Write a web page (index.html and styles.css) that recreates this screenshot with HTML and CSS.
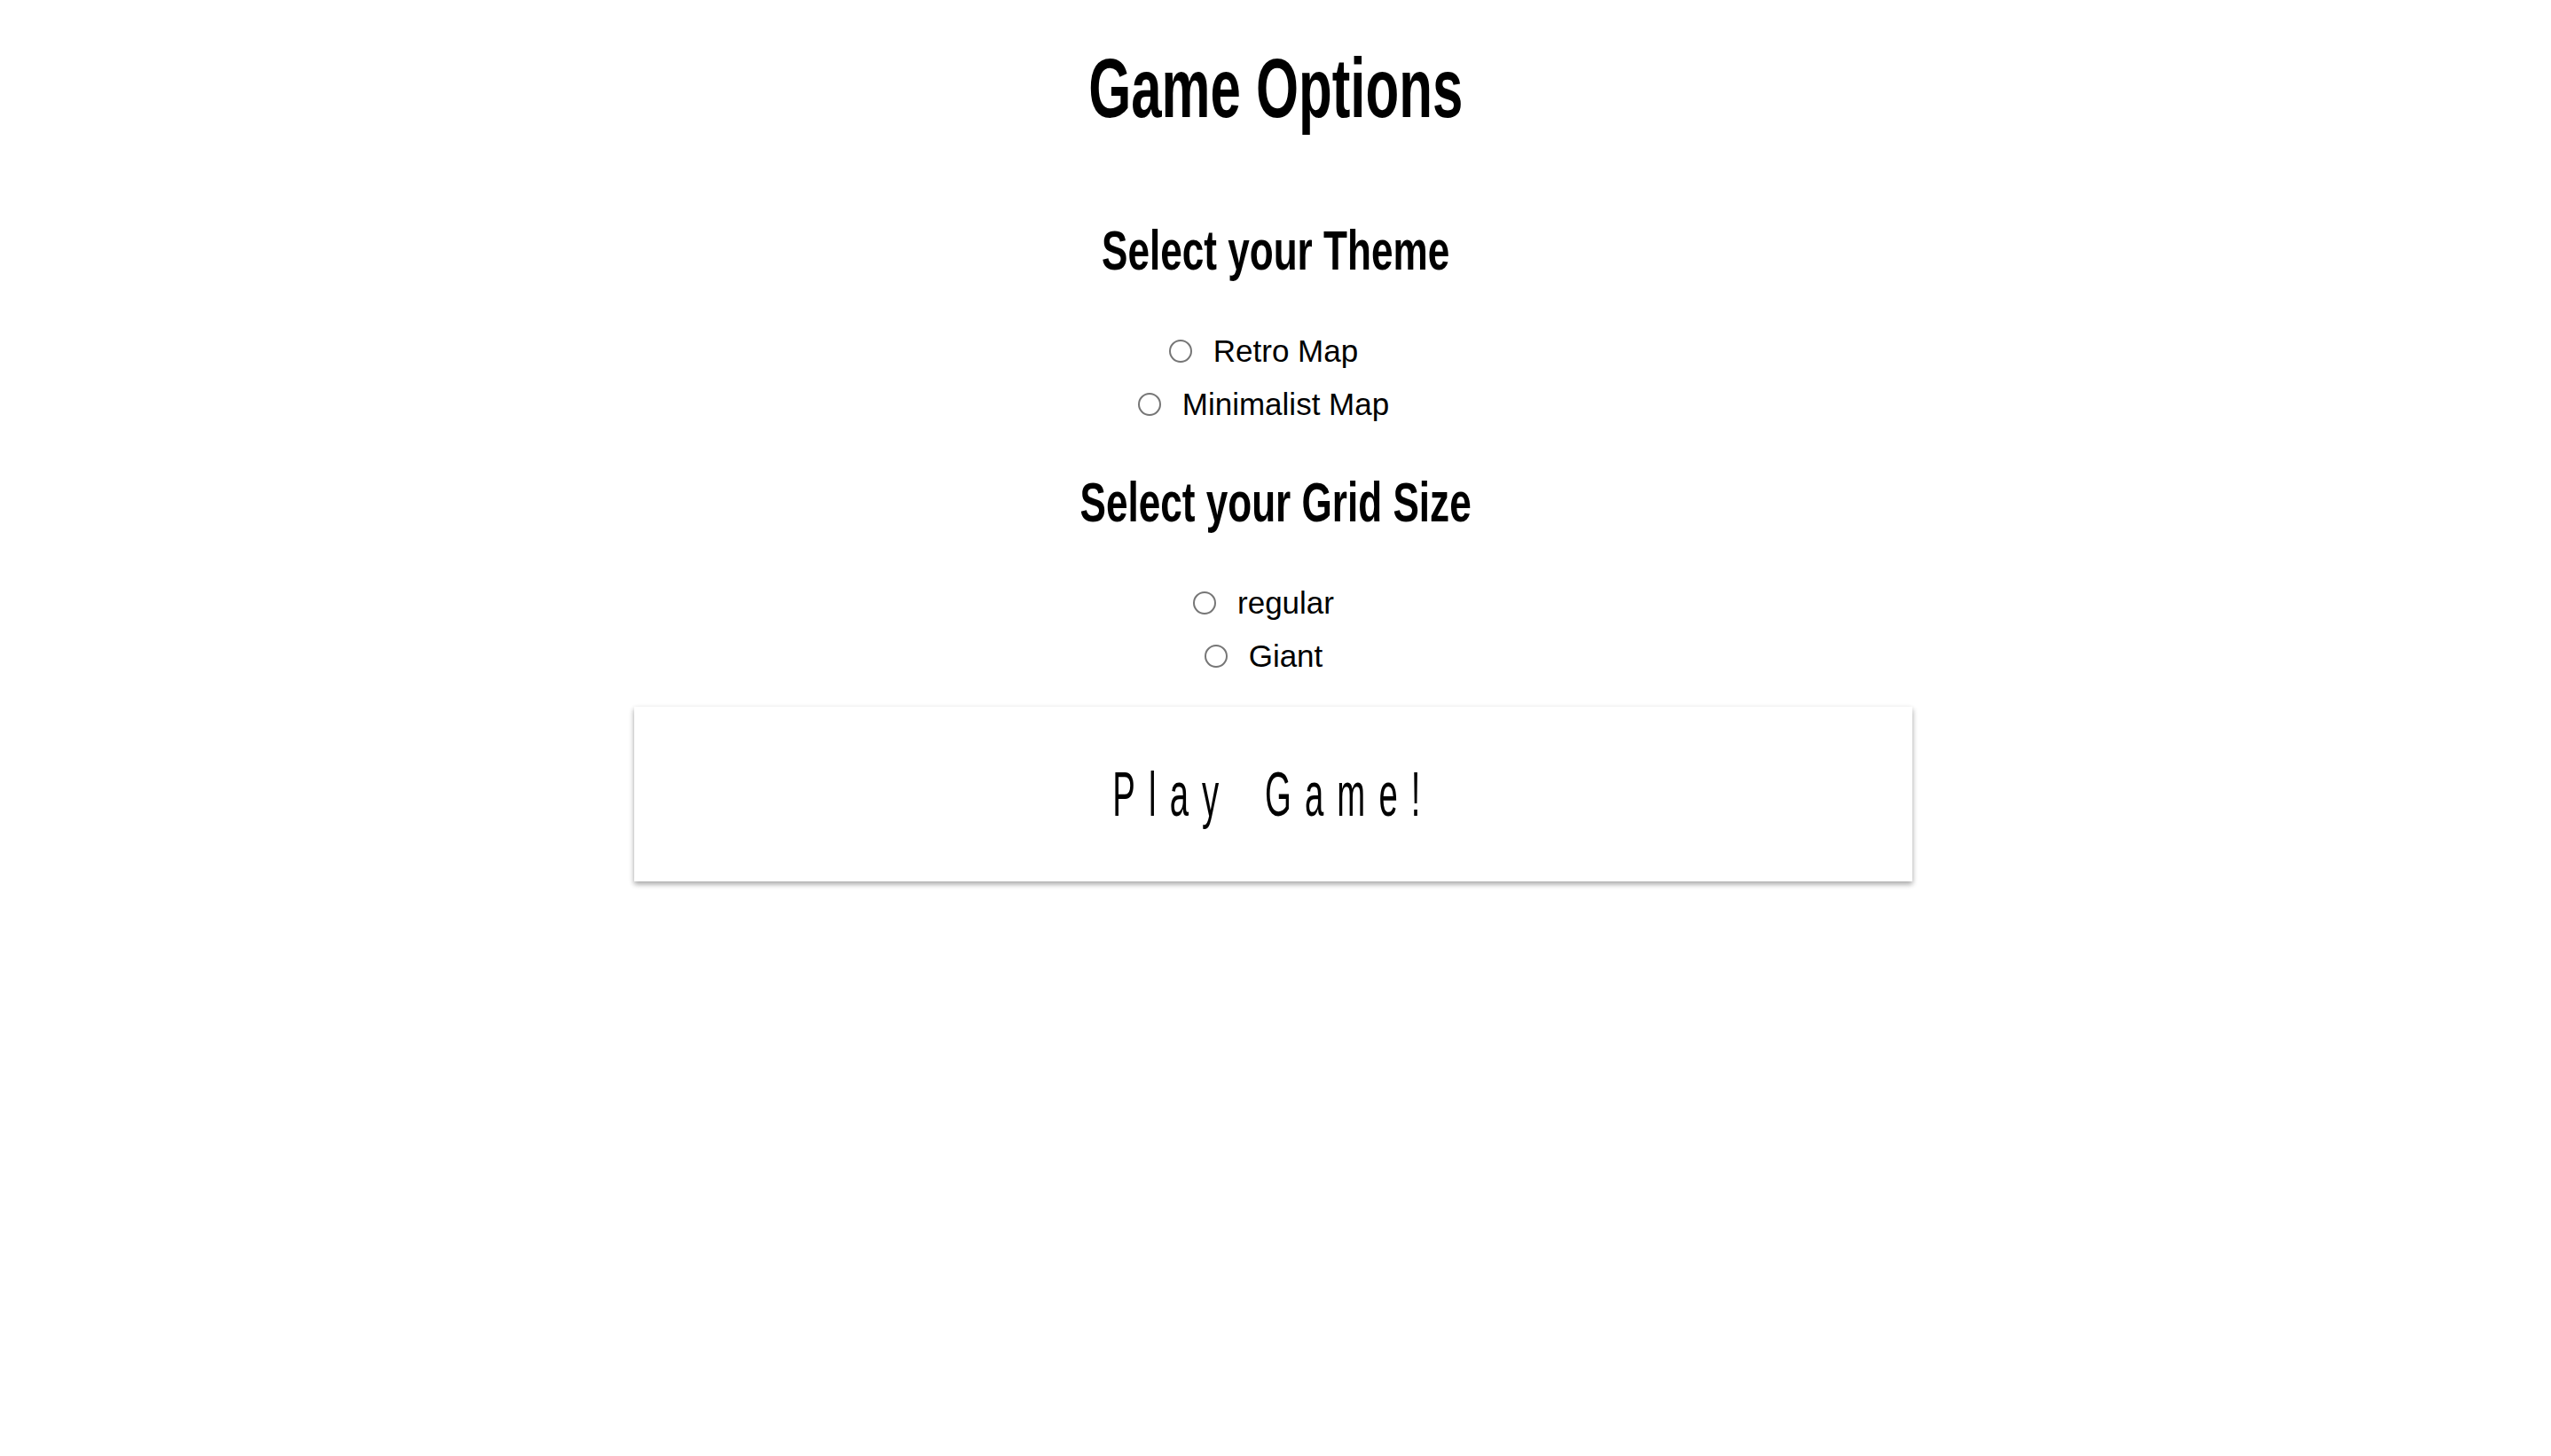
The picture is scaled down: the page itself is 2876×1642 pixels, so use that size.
FILE: index.html
```html
<!DOCTYPE html>
<html lang="en">
<head>
<meta charset="utf-8">
<title>Game Options</title>
<link rel="stylesheet" href="styles.css">
</head>
<body>
<main class="page">
  <h1 class="title">Game Options</h1>

  <section class="group">
    <h2 class="group-title">Select your Theme</h2>
    <div class="options">
      <label class="option"><input class="radio" type="radio" name="theme" value="retro"><span class="option-text">Retro Map</span></label>
      <label class="option"><input class="radio" type="radio" name="theme" value="minimalist"><span class="option-text">Minimalist Map</span></label>
    </div>
  </section>

  <section class="group">
    <h2 class="group-title">Select your Grid Size</h2>
    <div class="options">
      <label class="option"><input class="radio" type="radio" name="grid" value="regular"><span class="option-text">regular</span></label>
      <label class="option"><input class="radio" type="radio" name="grid" value="giant"><span class="option-text">Giant</span></label>
    </div>
  </section>

  <button class="play-btn" type="button"><span class="play-text">Play Game!</span></button>
</main>
</body>
</html>
```

FILE: styles.css
```css
html, body {
  margin: 0;
  padding: 0;
  background: #ffffff;
}

body {
  font-family: "Liberation Sans", Arial, sans-serif;
  color: #000000;
}

.page {
  display: flex;
  flex-direction: column;
  align-items: center;
  padding-top: 53px;
  padding-bottom: 40px;
}

.title {
  margin: 0 0 55px;
  font-size: 94px;
  line-height: 1;
  font-weight: 700;
  letter-spacing: 0;
  transform: scaleX(0.657);
  transform-origin: center;
  white-space: nowrap;
}

.group {
  margin-top: 49px;
  display: flex;
  flex-direction: column;
  align-items: center;
}

.group-title {
  margin: 0 0 52px;
  font-size: 63px;
  line-height: 1;
  font-weight: 700;
  transform: scaleX(0.70);
  transform-origin: center;
  white-space: nowrap;
}

.options {
  display: flex;
  flex-direction: column;
  align-items: center;
}

.option {
  display: flex;
  align-items: center;
  gap: 24px;
  height: 60px;
  padding-right: 27px;
  font-size: 35px;
  line-height: 60px;
  cursor: pointer;
}

.radio {
  appearance: none;
  -webkit-appearance: none;
  margin: 0;
  width: 26px;
  height: 26px;
  border: 2px solid #767676;
  border-radius: 50%;
  background: #ffffff;
  box-sizing: border-box;
  flex: none;
}

.option-text {
  white-space: nowrap;
}

.play-btn {
  margin: 27px 5px 0 0;
  width: 1441px;
  height: 197px;
  flex: none;
  display: flex;
  align-items: center;
  justify-content: center;
  background: #ffffff;
  border: none;
  padding: 0;
  box-shadow: 0 3px 6px rgba(0, 0, 0, 0.16), 0 3px 6px rgba(0, 0, 0, 0.23);
  font-family: "Liberation Sans", Arial, sans-serif;
  color: #000000;
  cursor: pointer;
}

.play-text {
  display: inline-block;
  font-size: 71px;
  line-height: 1;
  font-weight: 400;
  letter-spacing: 28px;
  word-spacing: 20px;
  transform: scaleX(0.54);
  transform-origin: center;
  white-space: nowrap;
}
```
